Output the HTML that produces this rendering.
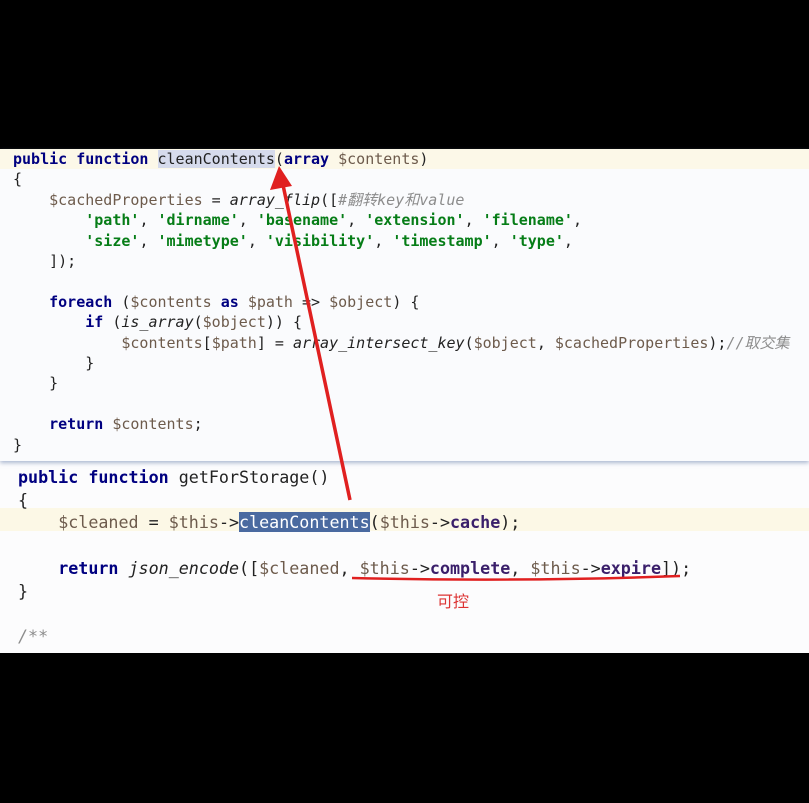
<!DOCTYPE html>
<html><head><meta charset="utf-8"><style>
body{margin:0;width:809px;height:803px;background:#000;position:relative;overflow:hidden;font-family:"Liberation Mono","Noto Sans CJK SC",monospace}
.top{position:absolute;left:0;top:149px;width:809px;height:312px;background:#fafbfd;box-shadow:0 2px 4px rgba(120,140,180,.6);z-index:2}
.bot{position:absolute;left:0;top:461px;width:809px;height:192px;background:#fcfcfd}
pre{margin:0;position:absolute;white-space:pre;color:#222}
.t{left:13px;top:0;font-size:15px;line-height:20.4px}
.b{left:18px;top:5px;font-size:16.7px;line-height:22.7px}
.k{color:#000080;font-weight:bold}
.v{color:#6d5b4c}
.s{color:#067d17;font-weight:bold}
.i{font-style:italic}
.c{color:#8c8c8c;font-style:italic}
.f{color:#3a1f6a;font-weight:bold}
.hl1{position:absolute;left:0;top:0;width:809px;height:20px;background:#fcf8e8}
.hl2{position:absolute;left:0;top:47px;width:809px;height:23px;background:#fcf8e6}
.sel{background:#d6dbec}
.sel2{background:#4a6aa0;color:#fff}
</style></head><body>
<div class="top"><div class="hl1"></div>
<pre class="t"><span class="k">public function</span> <span class="sel">cleanContents</span>(<span class="k">array</span> <span class="v">$contents</span>)
{
    <span class="v">$cachedProperties</span> = <span class="i">array_flip</span>([<span class="c">#翻转key和value</span>
        <span class="s">'path'</span>, <span class="s">'dirname'</span>, <span class="s">'basename'</span>, <span class="s">'extension'</span>, <span class="s">'filename'</span>,
        <span class="s">'size'</span>, <span class="s">'mimetype'</span>, <span class="s">'visibility'</span>, <span class="s">'timestamp'</span>, <span class="s">'type'</span>,
    ]);

    <span class="k">foreach</span> (<span class="v">$contents</span> <span class="k">as</span> <span class="v">$path</span> => <span class="v">$object</span>) {
        <span class="k">if</span> (<span class="i">is_array</span>(<span class="v">$object</span>)) {
            <span class="v">$contents</span>[<span class="v">$path</span>] = <span class="i">array_intersect_key</span>(<span class="v">$object</span>, <span class="v">$cachedProperties</span>);<span class="c">//取交集</span>
        }
    }

    <span class="k">return</span> <span class="v">$contents</span>;
}</pre></div>
<div class="bot"><div class="hl2"></div>
<pre class="b"><span class="k">public function</span> getForStorage()
{
    <span class="v">$cleaned</span> = <span class="v">$this</span>-><span class="sel2">cleanContents</span>(<span class="v">$this</span>-><span class="f">cache</span>);

    <span class="k">return</span> <span class="i">json_encode</span>([<span class="v">$cleaned</span>, <span class="v">$this</span>-><span class="f">complete</span>, <span class="v">$this</span>-><span class="f">expire</span>]);
}

<span class="c">/**</span></pre>
<div style="position:absolute;left:437px;top:127px;color:#d33;font:16px 'Noto Sans CJK SC',sans-serif">可控</div>
</div>
<svg style="position:absolute;left:0;top:0;z-index:3" width="809" height="803">
<line x1="350" y1="500" x2="283" y2="185" stroke="#e02020" stroke-width="3.5"/>
<polygon points="279,166 270,190 292,186" fill="#e02020"/>
<path d="M352 578 Q520 582 680 576" stroke="#e02020" stroke-width="2.5" fill="none"/>
</svg>
</body></html>
